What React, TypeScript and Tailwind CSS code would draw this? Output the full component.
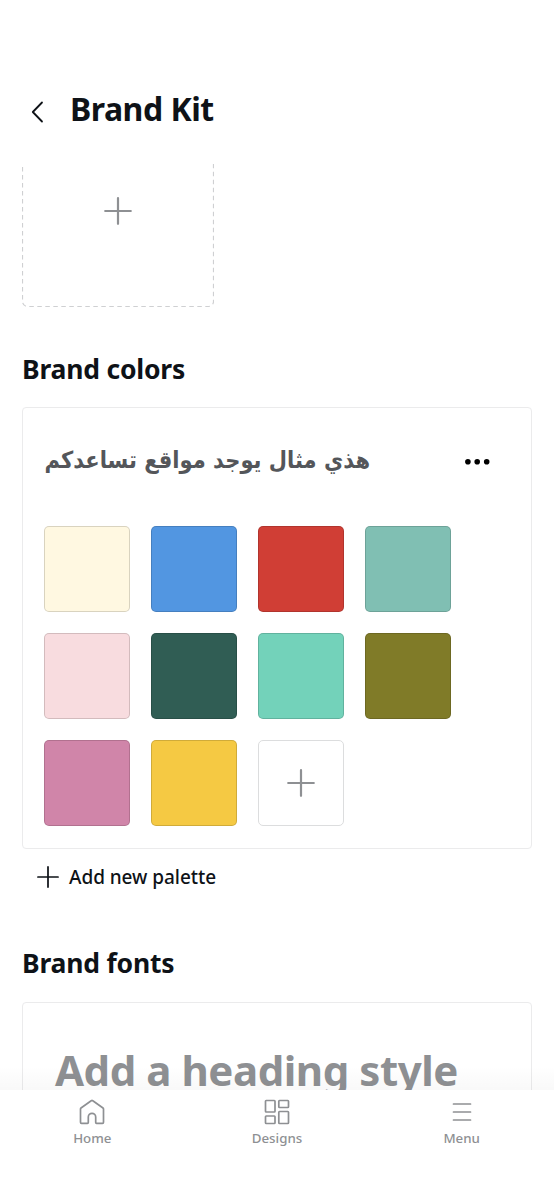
const palette = [
  'bg-[#fff8e1]',
  'bg-[#5296e1]',
  'bg-[#d03e35]',
  'bg-[#80bfb3]',
  'bg-[#f8dcdf]',
  'bg-[#305d54]',
  'bg-[#73d2ba]',
  'bg-[#807b28]',
  'bg-[#d085a9]',
  'bg-[#f5c943]',
]

function Plus({ size, className }: { size: number; className: string }) {
  return (
    <svg width={size} height={size} viewBox="0 0 28 28" fill="none" stroke="currentColor" strokeLinecap="round" className={className}>
      <path d="M14 1.200v25.600M1.200 14h25.600" />
    </svg>
  )
}

function HomeIcon() {
  return (
    <svg width="26" height="26" viewBox="0 0 26 26" fill="none" stroke="currentColor" strokeWidth="1.7" strokeLinejoin="round">
      <path d="M12.200 1.800 2 9a1.200 1.200 0 0 0-.5 1v13.300c0 .6.400 1 1 1h6c.5 0 .8-.3.8-.8v-5.500a3.700 3.700 0 0 1 7.400 0v5.500c0 .5.300.8.800.8h6c.6 0 1-.4 1-1V10a1.200 1.200 0 0 0-.5-1L13.800 1.800a1.300 1.300 0 0 0-1.600 0Z" />
    </svg>
  )
}

function DesignsIcon() {
  return (
    <svg width="26" height="26" viewBox="0 0 26 26" fill="none" stroke="currentColor" strokeWidth="1.7">
      <rect x="1.500" y="1.500" width="9.500" height="11.500" rx="0.700" />
      <rect x="14.800" y="1.500" width="9.700" height="7" rx="0.700" />
      <rect x="1.500" y="17" width="9.500" height="7.500" rx="0.700" />
      <rect x="14.800" y="12.500" width="9.700" height="12" rx="0.700" />
    </svg>
  )
}

function MenuIcon() {
  return (
    <svg width="26" height="26" viewBox="0 0 26 26" fill="none" stroke="currentColor" strokeWidth="1.7" strokeLinecap="round">
      <path d="M4.500 5h17M4.500 13h17M4.500 21h17" />
    </svg>
  )
}

const tabs = [
  { label: 'Home', icon: <HomeIcon /> },
  { label: 'Designs', icon: <DesignsIcon /> },
  { label: 'Menu', icon: <MenuIcon /> },
]

export default function App() {
  return (
    <div className="flex h-[1200px] w-[554px] flex-col overflow-hidden bg-white font-['Noto_Sans',sans-serif] text-[#0e1217]">
      <header className="flex h-[164px] shrink-0 items-start pt-[89px] pl-[31px]">
        <svg width="13" height="22" viewBox="0 0 13 22" fill="none" stroke="currentColor" strokeWidth="1.800" strokeLinecap="round" strokeLinejoin="round" className="mt-[12px]">
          <path d="M11 1.500 1.800 11 11 20.500" />
        </svg>
        <h1 className="ml-[26px] text-[32px] leading-[40px] font-bold tracking-[-0.5px] whitespace-nowrap">Brand Kit</h1>
      </header>

      <main className="h-[926px] shrink-0 overflow-hidden px-[22px]">
        <div className="relative -mt-[49px] flex h-[192px] w-[192px] items-center justify-center">
          <svg width="192" height="192" fill="none" className="absolute inset-0 text-[#cfd0d2]">
            <rect x="0.500" y="0.500" width="191" height="191" rx="5" stroke="currentColor" strokeWidth="1.200" strokeDasharray="4.500 3.500" />
          </svg>
          <Plus size={28} className="text-[#8e9093] stroke-[2.200]" />
        </div>

        <h2 className="mt-[43px] text-[26.500px] leading-[38px] font-bold tracking-[-0.2px] whitespace-nowrap">Brand colors</h2>
        <section className="mt-[19px] h-[442px] rounded-[4px] border border-[#ebebec] px-[21px]">
          <div className="flex h-[118px] items-start pt-[30px]">
            <h3 dir="rtl" className="w-[326px] text-right font-['DejaVu_Sans_Condensed','DejaVu_Sans',sans-serif] text-[23.400px] leading-[44px] font-bold whitespace-nowrap text-[#54565a]">هذي مثال يوجد مواقع تساعدكم</h3>
            <svg width="26" height="8" viewBox="0 0 26 8" className="mt-[20px] ml-[94px] fill-black">
              <circle cx="3.900" cy="3.700" r="2.800" />
              <circle cx="13.200" cy="3.700" r="2.800" />
              <circle cx="22.700" cy="3.700" r="2.800" />
            </svg>
          </div>
          <div className="grid w-[407px] grid-cols-4 gap-[21px]">
            {palette.map(color => (
              <div key={color} className={`h-[86px] w-[86px] rounded-[5px] border border-black/15 ${color}`} />
            ))}
            <div className="flex h-[86px] w-[86px] items-center justify-center rounded-[5px] border border-[#dcddde]">
              <Plus size={28} className="text-[#8e9093] stroke-[2.200]" />
            </div>
          </div>
        </section>

        <button className="mt-[10px] flex h-[36px] items-center pl-[15px] text-[19px] font-medium whitespace-nowrap">
          <Plus size={22} className="stroke-[2.200]" />
          <span className="ml-[10px] tracking-[-0.05px]">Add new palette</span>
        </button>

        <h2 className="mt-[49px] text-[26.500px] leading-[38px] font-bold tracking-[-0.2px] whitespace-nowrap">Brand fonts</h2>
        <section className="mt-[20px] h-[200px] rounded-[4px] border border-[#ebebec] px-[32px] pt-[37px]">
          <p className="text-[42px] leading-[60px] font-bold tracking-[-0.45px] whitespace-nowrap text-[#8e9093]">Add a heading style</p>
        </section>
      </main>

      <nav className="relative grid h-[110px] shrink-0 grid-cols-3 bg-white text-[#8e9093]">
        <div className="absolute inset-x-0 -top-[24px] h-[24px] bg-linear-to-b from-transparent to-black/[0.025]" />
        {tabs.map(tab => (
          <div key={tab.label} className="flex flex-col items-center pt-[8.5px]">
            {tab.icon}
            <span className="mt-[3.5px] text-[13.300px] leading-[20px] font-medium">{tab.label}</span>
          </div>
        ))}
      </nav>
    </div>
  )
}
